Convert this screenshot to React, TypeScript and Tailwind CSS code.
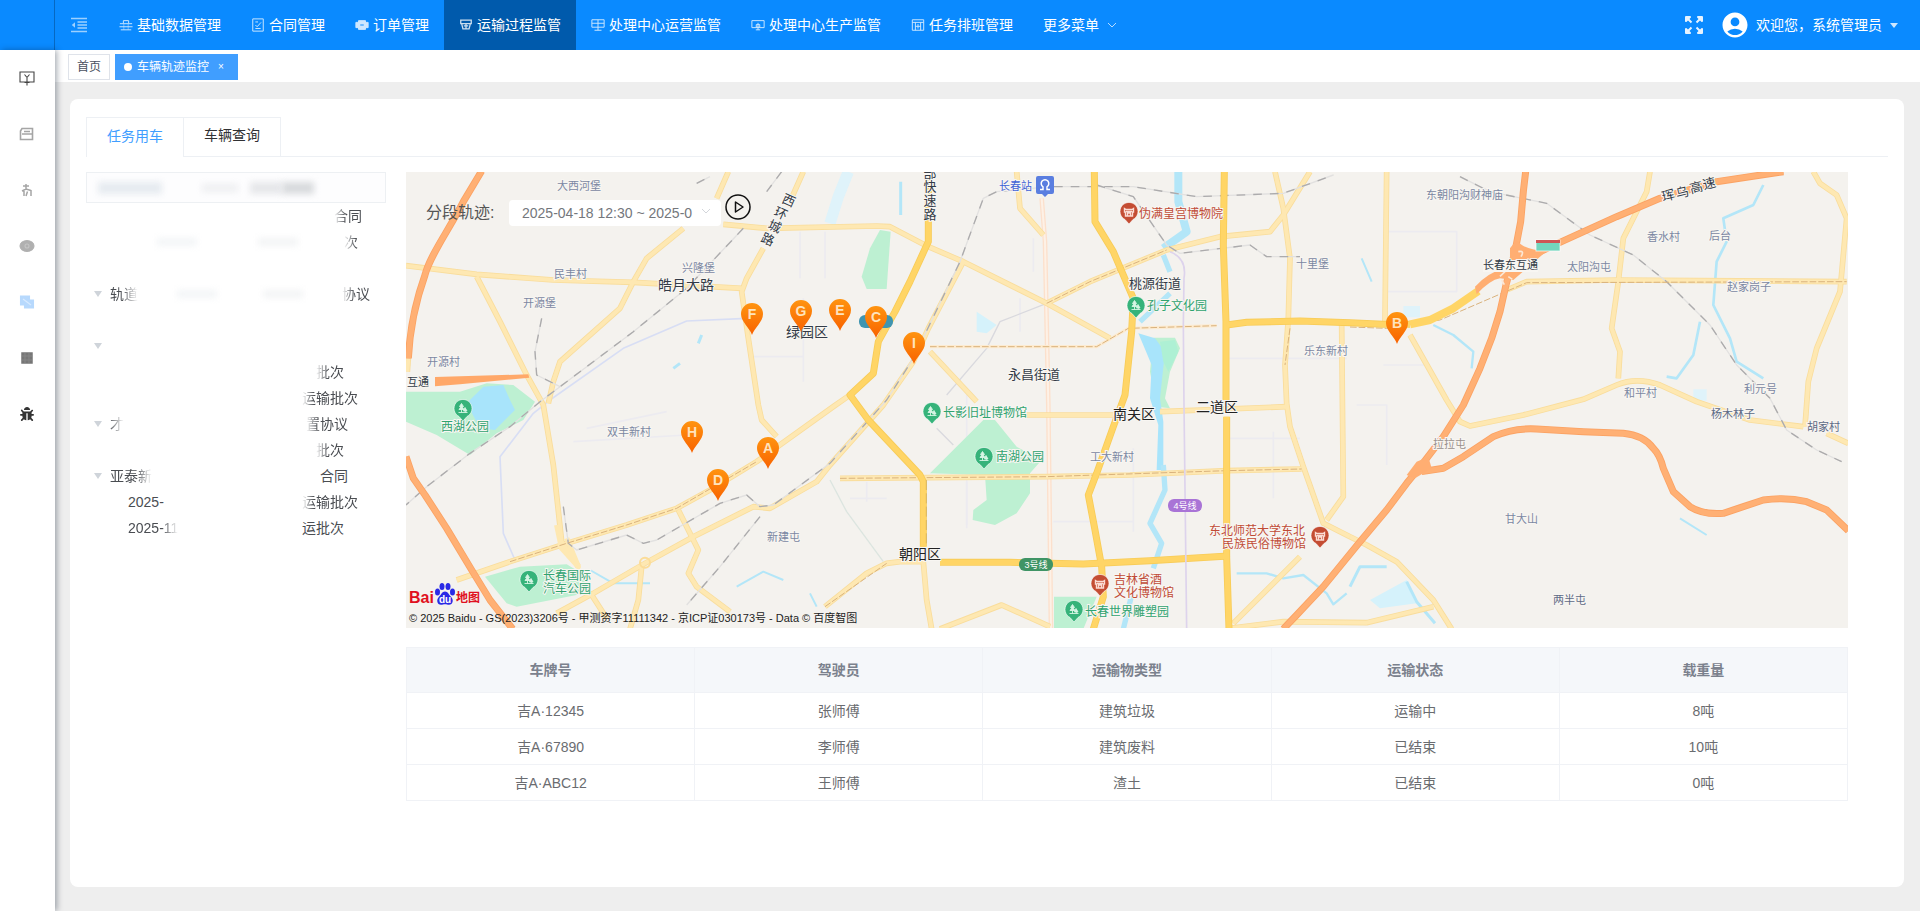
import React from "react";
import { MdAccountCircle } from "react-icons/md";
import { FaBug } from "react-icons/fa";

type IconProps = { className?: string };

function Glyph({ children, className = "size-3.5" }: { children: React.ReactNode; className?: string }) {
  return (
    <svg viewBox="0 0 16 16" className={className} fill="none" stroke="currentColor" strokeWidth="1.1" aria-hidden="true">
      {children}
    </svg>
  );
}

const CollapseIcon = ({ className }: IconProps) => (
  <Glyph className={className}>
    <path d="M0 1.500h16M6.500 5h9.500M6.500 8h9.500M6.500 11h9.500M0 14.500h16" strokeWidth="1.300" />
    <path d="M4 5.200v5.600L0.800 8z" fill="currentColor" stroke="none" />
  </Glyph>
);
const BaseIcon = () => (
  <Glyph>
    <path d="M5 6V3h6v3M1 6.500h14M0.500 10h15M2 13.500h12" />
    <path d="M5.500 6.500v7M10.500 6.500v7" strokeOpacity="0.500" />
  </Glyph>
);
const ContractIcon = () => (
  <Glyph>
    <path d="M2 1h12v14H2zM5 4.500h3M5 12h6M5 8l2 2 4.500-5" />
  </Glyph>
);
const OrderIcon = () => (
  <Glyph>
    <path d="M1 5h14v6H1zM4 3h8v10H4z" fill="currentColor" />
    <path d="M6 8h4" stroke="#0a8aff" />
  </Glyph>
);
const TransportIcon = () => (
  <Glyph>
    <path d="M2 2.500h12v4H2zM3 6.500l1.500 6h7l1.500-6M5.500 9h5M8 6.500v6" strokeWidth="1.500" />
  </Glyph>
);
const OperateIcon = () => (
  <Glyph>
    <path d="M1 2h14v8.500H1zM1 6h14M8 2v12M4 14h8" />
  </Glyph>
);
const ProduceIcon = () => (
  <Glyph>
    <path d="M1 3h14v8H1zM8 5.500v8M6 7.500h4v3H6zM5.500 13.500h5" />
  </Glyph>
);
const ScheduleIcon = () => (
  <Glyph>
    <path d="M1.500 2h13v12h-13zM1.500 5h13M5 5v9M11 5v9M5 9.500h6M8 7v5" />
  </Glyph>
);

const navItems = [
  { label: "基础数据管理", Icon: BaseIcon },
  { label: "合同管理", Icon: ContractIcon },
  { label: "订单管理", Icon: OrderIcon },
  { label: "运输过程监管", Icon: TransportIcon, active: true },
  { label: "处理中心运营监管", Icon: OperateIcon },
  { label: "处理中心生产监管", Icon: ProduceIcon },
  { label: "任务排班管理", Icon: ScheduleIcon },
];

function Header() {
  return (
    <header className="flex h-[50px] shrink-0 items-stretch bg-[#0a8aff] text-sm text-white">
      <div className="w-[55px] shrink-0 border-r border-[#0668c2]" />
      <button aria-label="收起菜单" className="flex w-[49px] items-center pl-4">
        <CollapseIcon className="size-4 opacity-60" />
      </button>
      <nav className="flex">
        {navItems.map(({ label, Icon, active }) => (
          <a
            key={label}
            href="#"
            className={`flex items-center gap-1 px-[15px] whitespace-nowrap ${active ? "bg-[#005aac]" : ""}`}
          >
            <span className="opacity-80">
              <Icon />
            </span>
            {label}
          </a>
        ))}
        <button className="flex items-center gap-2 px-[15px] whitespace-nowrap">
          更多菜单
          <svg viewBox="0 0 10 6" className="h-1.5 w-2.5 opacity-70" fill="none" stroke="currentColor" aria-hidden="true">
            <path d="M1 1l4 4 4-4" />
          </svg>
        </button>
      </nav>
      <div className="ml-auto flex items-center gap-4 pr-[22px]">
        <button aria-label="全屏">
          <svg viewBox="0 0 20 20" className="size-5 opacity-90" fill="currentColor" stroke="currentColor" aria-hidden="true">
            <path d="M2 2h4L2 6zM18 2v4l-4-4zM2 18v-4l4 4zM18 18h-4l4-4z" strokeLinejoin="round" strokeWidth="2" />
            <path d="M3 3l4.500 4.500M17 3l-4.500 4.500M3 17l4.500-4.500M17 17l-4.500-4.500" strokeWidth="2" />
          </svg>
        </button>
        <button className="flex items-center">
          <MdAccountCircle className="size-[30px]" />
          <span className="ml-1.5">欢迎您，系统管理员</span>
          <svg viewBox="0 0 8 5" className="ml-2 h-[5px] w-2 opacity-80" fill="currentColor" aria-hidden="true">
            <path d="M0 0h8L4 5z" />
          </svg>
        </button>
      </div>
    </header>
  );
}

const sideItems = [
  {
    label: "监控",
    tone: "text-[#444]",
    icon: (
      <Glyph className="size-4">
        <path d="M1 2h14v10H1zM8 7v8.500M5.500 12.500h5M5.500 4.500l2.500 3 2.500-3" />
      </Glyph>
    ),
  },
  {
    label: "车辆",
    tone: "text-[#a5a5a5]",
    icon: (
      <Glyph className="size-4">
        <path d="M3 2.500h10.500v11H1.500V5zM3 8h11M5 5.500h6" strokeWidth="1.600" />
      </Glyph>
    ),
  },
  {
    label: "人员",
    tone: "text-[#a5a5a5]",
    icon: (
      <Glyph className="size-4">
        <path d="M7 2v5M4 4h6M3 9l4-2 5 1.500M5 8v6M12 8v6M8.500 9.500L7 14" strokeWidth="1.500" />
      </Glyph>
    ),
  },
  {
    label: "查看",
    tone: "text-[#b0b0b0]",
    icon: (
      <Glyph className="size-4">
        <ellipse cx="8" cy="8" rx="7" ry="5.500" fill="currentColor" />
        <circle cx="8" cy="8" r="2" stroke="#c4c4c4" />
      </Glyph>
    ),
  },
  {
    label: "轨迹",
    tone: "text-[#b7d9fd]",
    icon: (
      <Glyph className="size-4">
        <path d="M1.500 2h9v4h4v8h-9v-3h-4z" fill="currentColor" />
        <path d="M4 5l8 6" stroke="#d9ebff" />
      </Glyph>
    ),
  },
  {
    label: "报表",
    tone: "text-[#777]",
    icon: (
      <Glyph className="size-4">
        <path d="M3 3h10v10H3z" fill="currentColor" strokeWidth="1.500" />
        <path d="M3 6h10M6 3v10M10 3v10M3 10h10" stroke="#868686" />
      </Glyph>
    ),
  },
  { label: "调试", tone: "text-[#333]", icon: <FaBug className="size-3.5" /> },
];

function Sidebar() {
  return (
    <aside className="z-10 w-[55px] shrink-0 bg-white pr-px shadow-[2px_0_6px_rgba(0,21,41,0.35)]">
      <nav className="flex flex-col">
        {sideItems.map((s) => (
          <a key={s.label} href="#" aria-label={s.label} className={`flex h-14 items-center justify-center ${s.tone}`}>
            {s.icon}
          </a>
        ))}
      </nav>
    </aside>
  );
}

type Row = {
  left?: string;
  leftCut?: boolean;
  indent?: boolean;
  right?: string;
  rightCut?: boolean;
  end: string;
  caret?: boolean;
  smudge?: boolean;
};

const treeRows: Row[] = [
  { right: "合同", rightCut: true, end: "pr-6" },
  { right: "次", rightCut: true, end: "pr-7", smudge: true },
  { end: "pr-0" },
  { caret: true, left: "轨道", leftCut: true, right: "协议", rightCut: true, end: "pr-4", smudge: true },
  { end: "pr-0" },
  { caret: true, end: "pr-0" },
  { right: "批次", rightCut: true, end: "pr-[42px]" },
  { right: "运输批次", rightCut: true, end: "pr-7" },
  { caret: true, left: "才", leftCut: true, right: "置协议", rightCut: true, end: "pr-[38px]" },
  { right: "批次", rightCut: true, end: "pr-[42px]" },
  { caret: true, left: "亚泰新", leftCut: true, right: "合同", end: "pr-[38px]" },
  { indent: true, left: "2025-", right: "运输批次", rightCut: true, end: "pr-7" },
  { indent: true, left: "2025-11", leftCut: true, right: "运批次", end: "pr-[42px]" },
];

function Tree() {
  return (
    <section className="w-[300px] shrink-0 text-sm text-[#4a4d52]">
      <div className="relative">
        <input
          aria-label="搜索合同"
          className="block h-[31px] w-full border border-[#edf0f3] bg-[#fdfdfe] px-3 outline-none"
        />
        <div className="pointer-events-none absolute inset-0 flex items-center px-3" aria-hidden="true">
          <div className="h-3 w-16 bg-[#e6ebf0] blur-[3px]" />
          <div className="ml-10 h-2 w-9 bg-[#eeeff1] blur-[3px]" />
          <div className="ml-3 h-3 w-8 bg-[#e6e7ea] blur-[3px]" />
          <div className="h-3 w-8 bg-[#d8dadd] blur-[3px]" />
        </div>
      </div>
      <ul>
        {treeRows.map((r, i) => (
          <li key={i} className={`flex h-[26px] items-center pl-2 ${r.end}`}>
            <span className="flex w-4 shrink-0">
              {r.caret && (
                <svg viewBox="0 0 8 6" className="h-1.5 w-2 text-[#cfd4da]" fill="currentColor" aria-hidden="true">
                  <path d="M0 0h8L4 6z" />
                </svg>
              )}
            </span>
            <span className={`whitespace-nowrap ${r.indent ? "pl-[18px]" : ""}`}>
              <span className={r.leftCut ? "[mask-image:linear-gradient(to_left,transparent,black_16px)]" : ""}>
                {r.left}
              </span>
            </span>
            <span className="flex flex-1 items-center justify-around px-4" aria-hidden="true">
              {r.smudge && (
                <>
                  <span className="h-2 w-10 bg-[#f3f5f7] blur-[3px]" />
                  <span className="h-2 w-10 bg-[#f3f4f5] blur-[3px]" />
                </>
              )}
            </span>
            <span
              className={`whitespace-nowrap ${
                r.rightCut ? "[mask-image:linear-gradient(to_right,transparent,black_12px)]" : ""
              }`}
            >
              {r.right}
            </span>
          </li>
        ))}
      </ul>
    </section>
  );
}

const gx = (x: number) => Math.round(x / 3 - 6);
const gy = (y: number) => Math.round(y / 3 - 7);

const greens = [
  "18,680 180,680 260,655 340,660 405,710 370,765 290,805 210,870 110,810 18,770",
  "1440,195 1472,200 1460,372 1400,372 1385,335 1410,250",
  "1590,925 1750,765 1785,765 1850,845 1925,885 1890,925 1890,985 1850,1045 1785,1080 1718,1065 1720,1035 1760,1005 1755,930",
  "255,1235 360,1205 500,1198 570,1240 530,1290 350,1325 320,1315",
  "1962,1295 2090,1295 2050,1392 1962,1392",
  "2260,518 2325,518 2340,550 2310,620 2295,700 2310,730 2270,725 2250,620",
];
const waters = [
  "200,715 250,665 310,660 330,705 345,735 285,795 240,790",
  "2215,505 2265,520 2295,560 2280,700 2290,770 2290,915 2270,915 2275,780 2250,700 2255,600",
];
const ponds = ["2910,1305 3020,1245 3050,1315 2940,1330", "1730,440 1790,480 1760,505 1730,500"];
const streams = [
  { d: "M2335 20V110L2360 200L2290 250", w: 24 },
  { d: "M2290 270L2310 320M2310 385L2220 470", w: 16 },
  { d: "M2290 900L2295 975L2250 1075L2285 1135L2260 1210M2195 1290L2170 1392", w: 16 },
  { d: "M4090 60L4060 120L3970 160L3980 230L3950 290L3940 420L3990 520L4010 590L4090 640", w: 8 },
  { d: "M3900 470L3880 570L3830 640L3800 635", w: 8 },
  { d: "M3100 480L3160 510L3220 560L3215 610", w: 7 },
  { d: "M2850 1265L2880 1205L2960 1205M3020 1250L3050 1310L3105 1375", w: 9 },
  { d: "M2510 1225L2600 1225L2650 1240L2710 1230L2780 1285L2800 1318L2840 1285", w: 7 },
  { d: "M1010 1265L1090 1220L1150 1245M1230 1285L1250 1325M570 1215L640 1255L750 1255", w: 6 },
  { d: "M895 535L905 510M820 610L840 595M1502 50V150", w: 9 },
  { d: "M2885 280L2915 350M3840 1060L3920 1110", w: 6 },
];
const faint = [
  "M1200 200V340M1275 200V340M1060 575H1210M1210 400V650",
  "M1400 950V1010M1700 690V1090M1860 400V500M2200 1070H1960M2480 580H2840M2200 850V1100",
  "M2960 200H3170V380H2960M2950 600H3080M2870 720H2960V900",
  "M560 790L800 740M520 830L860 810M1900 220V320M2470 820H2700M2620 800V1000",
  "M1350 1000H1460M1700 950V1080",
];
const paleRoads = [
  "M18 302L230 328L460 345L700 352L1025 370",
  "M985 20L950 100M850 190L740 280L700 350L660 430L480 590L460 650L445 715",
  "M230 335L300 470L380 630L430 720L440 780L460 900L485 1130L535 1205",
  "M1210 20L1170 110M1090 250L1040 340L1025 380L1045 520L1075 720L1085 765L1130 815",
  "M970 178L1100 190L1430 183L1470 185L1585 245L1690 290L1940 415L2130 520",
  "M170 1245L330 1190L500 1135L680 1080L830 1030L930 975L1070 890L1300 725L1350 690",
  "M470 1345L580 1285L735 1195L880 1115L1060 1025L1110 1030L1250 950L1290 900L1450 720L1540 590L1585 490L1690 290",
  "M835 1035L895 1155L865 1225L890 1265L990 1340",
  "M725 1205L715 1305L690 1392M575 1290L620 1360",
  "M1275 1325L1400 1225L1460 1195L1500 1190L1570 1190",
  "M1320 940L1940 935L2190 930L2480 917L2705 912",
  "M1850 20L1860 130L1930 210",
  "M1940 415L2070 350L2300 255L2460 215L2610 200L2650 150L2730 20",
  "M2625 20L2650 130L2670 280L2665 460L2655 600L2660 715L2670 785L2710 905L2770 1075L2850 1115",
  "M2825 480L2830 995L2780 1065",
  "M1880 750H2150M2280 740L2660 725",
  "M1590 560L1730 710",
  "M1570 1190L1580 1305L1595 1392M1620 1392L1805 1320L1950 1385",
  "M2500 1375L2700 1175M2490 1390L2650 1370L2900 1373L3100 1325",
  "M2850 1115L2900 1140L2990 1190L3100 1305L3155 1392",
  "M2960 20L2955 470M3030 510L3140 705L3180 770L3210 783L3370 750L3550 703L3650 660Q3710 635 3780 660L3890 710L4050 765L4210 785M4280 805L4345 835",
  "M3750 20L3740 80L3670 220L3655 350L3635 490L3660 560L3655 640",
  "M3320 375L3380 350L3650 345L4340 350",
  "M4240 20L4260 55L4310 90L4340 160L4320 380L4250 550L4225 650L4215 785",
  "M25 580L22 620",
];
const yellowRoads = [
  "M1585 20V230L1530 350L1485 440L1435 530L1420 625L1350 690L1405 765L1560 930L1570 950V1145",
  "M1620 1192L1830 1192L2050 1197L2250 1187L2485 1173",
  "M2083 20L2085 170L2140 260L2200 400L2195 500L2175 690L2140 785L2090 925L2065 990L2085 1095L2105 1205L2110 1295L2080 1392",
  "M2473 20L2470 240L2478 470V705M2480 755V1175L2487 1392",
  "M2480 480L2540 472L2700 468L2850 473L2950 478L3030 478",
];
const highways = [
  "M245 18L190 110C150 190 90 270 75 330C50 400 30 480 25 580",
  "M18 875L40 940L75 990L140 1090L215 1215L270 1305L338 1392",
  "M3377 20L3370 80L3362 170L3345 260L3318 360L3300 440L3275 520L3240 610L3190 720L3130 815L3065 900L3020 955L2960 1035L2880 1130L2770 1265L2690 1350L2650 1392",
  "M4150 20L3950 50L3780 100L3650 155L3480 232L3410 265",
  "M3065 920L3130 910L3190 875L3280 815Q3340 788 3410 792L3550 800L3670 805Q3730 810 3760 850Q3780 870 3790 910L3820 980L3870 1025Q3910 1050 3970 1045L4030 1025L4090 1005Q4160 995 4220 1010L4280 1035L4345 1097",
];
const rails = [
  "M1145 20L1100 80M1030 190L860 370L700 500L500 650L420 710L330 785L210 865L80 965L18 1020",
  "M890 55L930 35M425 460L405 560L410 630L480 665",
  "M490 1025L505 1135L530 1155L680 1110L730 1135L770 1125L960 1015L1040 990L1080 1025L1120 1020L1290 895L1460 705L1540 580L1680 290L1750 100L1790 80L1950 65L2200 65L2390 95L2650 85L2800 30",
  "M1080 1055L960 1205L860 1320",
  "M2090 60L2200 95L2300 240L2340 265L2550 240L2600 275L2700 275",
  "M3180 35L3270 80L3440 115L3570 210L3700 270L3800 350L3930 480L4010 600L4110 700L4160 795L4250 855L4325 890",
];
const railOverlay =
  "M330 1190L500 1135L680 1080L830 1030L1070 890M1320 940L1940 935L2480 917L2705 912M1940 415L2070 350L2300 255M1590 545H2090L2185 490L2450 482M2850 486L2960 490L3120 465L3380 353L4340 350M2670 490L2655 600M1275 1325L1460 1195";

type Label = [text: string, x: number, y: number, size: number, tone: string];
const SLATE = "#7b87a2";
const INK = "#333b47";
const GREEN = "#2fa36f";
const RED = "#c04b36";
const labels: Label[] = [
  ["大西河堡", 472, 62, 11, SLATE],
  ["民丰村", 462, 327, 11, SLATE],
  ["兴隆堡", 845, 308, 11, SLATE],
  ["开源堡", 368, 415, 11, SLATE],
  ["开源村", 80, 591, 11, SLATE],
  ["互通", 20, 651, 11, INK],
  ["皓月大路", 773, 360, 14, INK],
  ["绿园区", 1157, 502, 14, INK],
  ["西湖公园", 122, 787, 12, GREEN],
  ["双丰新村", 622, 800, 11, SLATE],
  ["新建屯", 1102, 1117, 11, SLATE],
  ["长春国际", 428, 1233, 12, GREEN],
  ["汽车公园", 428, 1271, 12, GREEN],
  ["长春站", 1798, 63, 11, "#3f63d6"],
  ["伪满皇宫博物院", 2218, 148, 12, RED],
  ["桃源街道", 2188, 355, 13, INK],
  ["孔子文化园", 2240, 423, 12, GREEN],
  ["永昌街道", 1825, 626, 13, INK],
  ["十里堡", 2689, 296, 11, SLATE],
  ["乐东新村", 2712, 557, 11, SLATE],
  ["长影旧址博物馆", 1628, 745, 12, GREEN],
  ["南湖公园", 1787, 877, 12, GREEN],
  ["南关区", 2138, 747, 14, "#222"],
  ["二道区", 2388, 727, 14, "#222"],
  ["工大新村", 2070, 877, 11, SLATE],
  ["朝阳区", 1498, 1168, 14, "#222"],
  ["东北师范大学东北", 2428, 1099, 12, RED],
  ["民族民俗博物馆", 2466, 1137, 12, RED],
  ["吉林省酒", 2143, 1245, 12, RED],
  ["文化博物馆", 2143, 1283, 12, RED],
  ["长春世界雕塑园", 2055, 1341, 12, GREEN],
  ["东朝阳沟财神庙", 3078, 90, 11, SLATE],
  ["香水村", 3742, 216, 11, SLATE],
  ["后台", 3928, 213, 11, SLATE],
  ["太阳沟屯", 3500, 305, 11, SLATE],
  ["赵家岗子", 3982, 366, 11, SLATE],
  ["和平村", 3672, 684, 11, SLATE],
  ["利元号", 4032, 673, 11, SLATE],
  ["杨木林子", 3932, 747, 11, "#5d6a85"],
  ["胡家村", 4220, 786, 11, "#5d6a85"],
  ["拉拉屯", 3100, 838, 11, "#98908c"],
  ["甘大山", 3314, 1061, 11, SLATE],
  ["两半屯", 3460, 1306, 11, "#5d6a85"],
];

const markers: [string, number, number][] = [
  ["F", 1057, 446],
  ["G", 1204, 437],
  ["E", 1321, 434],
  ["C", 1429, 455],
  ["I", 1543, 533],
  ["H", 877, 800],
  ["A", 1105, 848],
  ["D", 953, 944],
  ["B", 2992, 473],
];

const parkPins: [number, number][] = [
  [189, 732],
  [386, 1246],
  [2207, 422],
  [1595, 740],
  [1751, 875],
  [2022, 1336],
];
const museumPins: [number, number][] = [
  [2186, 142],
  [2759, 1113],
  [2099, 1256],
];

function PoiPin({ x, y, fill, park }: { x: number; y: number; fill: string; park?: boolean }) {
  return (
    <g transform={`translate(${gx(x)} ${gy(y)})`}>
      <path d="M0 12L-4 7.500A9 9 0 1 1 4 7.500Z" fill={fill} stroke="#fff" strokeOpacity="0.600" />
      {park ? (
        <path
          d="M-1.500 -5.500L-3.500 -2.500h4zM-1.500 -3L-4 0.500h5zM2 -1.500L0.500 2h3.500zM-1.500 0v3.500M2.300 1v2.500M-4.500 3.500h9"
          fill="#d6f5e4"
          stroke="#d6f5e4"
          strokeWidth="0.900"
        />
      ) : (
        <path
          d="M-4.500 -3.500L-3 -2.500H3L4.500 -3.500V0H3.500V4H-3.500V0H-4.500zM-1.500 4V1h3v3M-3 -0.500h6"
          fill="none"
          stroke="#fbdcd4"
          strokeWidth="1.400"
        />
      )}
    </g>
  );
}

function LineBadge({ x, y, fill, text }: { x: number; y: number; fill: string; text?: string }) {
  return (
    <g>
      <rect x={gx(x)} y={gy(y)} width="34" height="13" rx="6" fill={fill} />
      {text && (
        <text x={gx(x) + 17} y={gy(y) + 10} fontSize="9" fill="#fff" textAnchor="middle">
          {text}
        </text>
      )}
    </g>
  );
}

const ringRoad: [string, number, number][] = [
  ["西", 1166, 105],
  ["环", 1144, 143],
  ["城", 1124, 183],
  ["路", 1103, 223],
];
const expressway: [string, number][] = [
  ["部", 23],
  ["快", 64],
  ["速", 105],
  ["路", 147],
];
const hunwu: [string, number, number][] = [
  ["珲", 3803, 90],
  ["乌", 3845, 80],
  ["高", 3887, 66],
  ["速", 3926, 55],
];

function MapCanvas() {
  return (
    <svg
      viewBox="0 0 1442 456"
      preserveAspectRatio="xMidYMid slice"
      className="block h-[456px] w-full"
      role="img"
      aria-label="车辆轨迹地图"
      fontFamily="'Liberation Sans', 'Noto Sans CJK SC', sans-serif"
    >
      <defs>
        <linearGradient id="marker" x1="0" y1="0" x2="0" y2="1">
          <stop offset="0" stopColor="#ff9410" />
          <stop offset="1" stopColor="#f86200" />
        </linearGradient>
      </defs>
      <rect width="1442" height="456" fill="#f4f2ee" />
      <g transform="translate(-6 -7) scale(0.33333)" fill="none" strokeLinejoin="round">
        {faint.map((d) => (
          <path key={d} d={d} stroke="#ecebf0" strokeWidth="5" />
        ))}
        {greens.map((p) => (
          <polygon key={p} points={p} fill="#bdf0d2" />
        ))}
        <g stroke="#dff3fa" strokeWidth="34">
          <path d="M1345 20L1315 95L1290 175" />
          <path d="M3010 440H3060M3880 690H3920" />
        </g>
        {ponds.map((p) => (
          <polygon key={p} points={p} fill="#d5f2fb" />
        ))}
        {waters.map((p) => (
          <polygon key={p} points={p} fill="#a8e4fb" />
        ))}
        <polygon points="2280,530 2325,525 2335,560 2305,620 2290,590" fill="#aef0d4" />
        {streams.map((s) => (
          <path key={s.d} d={s.d} stroke="#b3e6f8" strokeWidth={s.w} />
        ))}
        <path d="M1040 460L860 468L670 550L450 705L400 745L300 875L310 1105L345 1185" stroke="#d8def4" strokeWidth="5" />
        <path d="M1290 945L1340 1040L1450 1190" stroke="#dce5e0" strokeWidth="4" />
        <path d="M1610 790L1660 840M1640 690L1760 550L1800 470L1940 415" stroke="#d9d9de" strokeWidth="4" />
        <path d="M1925 100L1935 230L1945 720L1953 1392" stroke="#fce0cc" strokeWidth="14" />
        <path d="M1925 100L1935 230L1945 720L1953 1392" stroke="#fdf1e6" strokeWidth="6" />
        <path d="M1590 545H2090L2185 490L2450 482" stroke="#fdebd0" strokeWidth="10" />
        {paleRoads.map((d) => (
          <path key={d} d={d} stroke="#f9dd9c" strokeWidth="17" />
        ))}
        {paleRoads.map((d) => (
          <path key={d} d={d} stroke="#fee8b2" strokeWidth="12" />
        ))}
        <path d="M470 1080L485 1150L535 1205L500 1120" stroke="#fee8b2" strokeWidth="16" />
        <circle cx="735" cy="1193" r="15" stroke="#fbdc98" strokeWidth="6" />
        {rails.map((d) => (
          <g key={d} strokeWidth="4">
            <path d={d} stroke="#e2e1e0" />
            <path d={d} stroke="#acabac" strokeDasharray="26 24" />
          </g>
        ))}
        <path d={railOverlay} stroke="#d9b27c" strokeWidth="3" strokeDasharray="20 6" />
        {yellowRoads.map((d) => (
          <path key={d} d={d} stroke="#f8cc58" strokeWidth="21" />
        ))}
        {yellowRoads.map((d) => (
          <path key={d} d={d} stroke="#ffd566" strokeWidth="16" />
        ))}
        <path d="M3030 478L3090 465L3160 430L3235 378" stroke="#ffd566" strokeWidth="24" />
        <path d="M1579 945V1140" stroke="#c9a75c" strokeWidth="2" strokeDasharray="30 10" />
        {highways.map((d) => (
          <path key={d} d={d} stroke="#fba263" strokeWidth="21" />
        ))}
        {highways.map((d) => (
          <path key={d} d={d} stroke="#ffb074" strokeWidth="16" />
        ))}
        <path d="M105 636L385 628L388 638L180 658L105 664Z" fill="#ffa869" />
        <path d="M3225 365Q3260 325 3330 300L3330 250L3350 225Q3370 255 3440 258L3340 345L3300 340Q3270 345 3230 388Z" fill="#ffae72" />
        <path d="M3355 260q20-5 8 15M3315 320l-15 14M3305 345l8 14M3325 335l12 8" stroke="#fbe7d6" strokeWidth="5" />
        <path d="M3050 890l35-15l10 35l-50 30l-25-10z" fill="#ffae72" />
        <path d="M2310 260Q2362 280 2352 340L2350 480L2352 720L2360 1392" stroke="#ddd3ec" strokeWidth="5" />
      </g>

      <g stroke="#f8f6f2" strokeWidth="2" paintOrder="stroke">
        <rect x={gx(3250)} y={gy(284)} width="55" height="12" fill="#f8f6f2" stroke="none" />
        <text x={gx(3250)} y={gy(300) + 4} fontSize="11" fill={INK}>
          长春东互通
        </text>
        {labels.map(([t, x, y, size, tone]) => (
          <text key={t} x={gx(x)} y={gy(y) + Math.round(size * 0.36)} fontSize={size} fill={tone}>
            {t}
          </text>
        ))}
        {ringRoad.map(([t, x, y]) => (
          <text key={t} transform={`translate(${gx(x)} ${gy(y)}) rotate(24)`} y="5" fontSize="13" fill={INK} textAnchor="middle">
            {t}
          </text>
        ))}
        {expressway.map(([t, y]) => (
          <text key={t} x={gx(1591)} y={gy(y) + 5} fontSize="13" fill={INK} textAnchor="middle">
            {t}
          </text>
        ))}
        {hunwu.map(([t, x, y]) => (
          <text key={t} transform={`translate(${gx(x)} ${gy(y)}) rotate(-14)`} y="5" fontSize="13" fill={INK} textAnchor="middle">
            {t}
          </text>
        ))}
      </g>

      <LineBadge x={2303} y={1001} fill="#a974d6" text="4号线" />
      <LineBadge x={1857} y={1178} fill="#3f9465" text="3号线" />
      <LineBadge x={1377} y={450} fill="#3f95b0" />
      <rect x={gx(3408)} y={gy(225)} width="24" height="11" fill="#73d6bd" stroke="#fff" strokeOpacity="0.700" />
      <rect x={gx(3408)} y={gy(225)} width="24" height="3" fill="#cf5555" />
      <g transform={`translate(${gx(1936)} ${gy(59)})`}>
        <path d="M-7 -9H7Q9 -9 9 -7V7Q9 9 7 9H3L0 12L-3 9H-7Q-9 9-9 7V-7Q-9-9-7-9Z" fill="#5a7ee0" />
        <path d="M-5 4.500h3V1.800a3.800 3.800 0 1 1 4 0v2.700h3" fill="none" stroke="#fff" strokeWidth="1.500" />
      </g>
      {parkPins.map(([x, y]) => (
        <PoiPin key={x} x={x} y={y} fill="#36b37a" park />
      ))}
      {museumPins.map(([x, y]) => (
        <PoiPin key={x} x={x} y={y} fill="#c44d33" />
      ))}

      {markers.map(([t, x, y]) => (
        <g key={t} transform={`translate(${gx(x)} ${gy(y)})`}>
          <path d="M0 21C-2 14 -11 8 -11 0A11 11 0 0 1 11 0C11 8 2 14 0 21Z" fill="url(#marker)" />
          <text y="5" fontSize="14" fontWeight="700" fill="#ffe3bd" textAnchor="middle">
            {t}
          </text>
        </g>
      ))}
    </svg>
  );
}

function BaiduLogo() {
  return (
    <div className="flex items-end font-bold text-[#e01020]">
      <span className="text-base leading-4">Bai</span>
      <svg viewBox="0 0 22 24" className="h-6 w-[22px]" fill="#2a2ae6" aria-hidden="true">
        <ellipse cx="3.500" cy="10" rx="2.500" ry="3.500" />
        <ellipse cx="8" cy="4.500" rx="2.500" ry="3.500" />
        <ellipse cx="14" cy="4.500" rx="2.500" ry="3.500" />
        <ellipse cx="18.500" cy="10" rx="2.500" ry="3.500" />
        <path d="M11 9.500c3 0 3.500 3 6 5.200c3 2.800 2 8-2 8c-1.500 0-2.500-0.500-4-0.500s-2.500 0.500-4 0.500c-4 0-5-5.200-2-8C7.500 12.500 8 9.500 11 9.500z" />
        <text x="11" y="21" fontSize="10" fontWeight="700" fill="#fff" textAnchor="middle">
          du
        </text>
      </svg>
      <span className="text-xs leading-4">地图</span>
    </div>
  );
}

function MapPanel() {
  return (
    <div className="relative overflow-hidden">
      <MapCanvas />
      <div className="absolute top-[22px] left-5 flex items-start">
        <label htmlFor="segment" className="w-[83px] pt-[7px] text-base leading-6 whitespace-nowrap text-[#555]">
          分段轨迹:
        </label>
        <div className="relative mt-1.5">
          <select
            id="segment"
            className="h-[26px] w-[212px] appearance-none rounded-sm bg-white pl-[13px] text-sm text-[#74777c] outline-none"
          >
            <option>2025-04-18 12:30 ~ 2025-0</option>
          </select>
          <svg viewBox="0 0 10 6" className="pointer-events-none absolute top-2 right-2.5 h-1.5 w-2.5" fill="none" stroke="#d3d6db" aria-hidden="true">
            <path d="M1 1l4 4 4-4" />
          </svg>
        </div>
        <button aria-label="播放" className="ml-1">
          <svg viewBox="0 0 26 26" className="size-[26px]" fill="none" stroke="#111" strokeWidth="1.500" strokeLinejoin="round" aria-hidden="true">
            <circle cx="13" cy="13" r="12" />
            <path d="M10.500 8l7.500 5l-7.500 5z" />
          </svg>
        </button>
      </div>
      <div className="absolute bottom-0.5 left-[3px] text-[#222]">
        <BaiduLogo />
        <p className="mt-1 text-[11px] leading-4">
          © 2025 Baidu - GS(2023)3206号 - 甲测资字11111342 - 京ICP证030173号 - Data © 百度智图
        </p>
      </div>
    </div>
  );
}

const columns = ["车牌号", "驾驶员", "运输物类型", "运输状态", "载重量"];
const vehicles = [
  ["吉A·12345", "张师傅", "建筑垃圾", "运输中", "8吨"],
  ["吉A·67890", "李师傅", "建筑废料", "已结束", "10吨"],
  ["吉A·ABC12", "王师傅", "渣土", "已结束", "0吨"],
];

function VehicleTable() {
  return (
    <table className="mt-[19px] w-full table-fixed border-collapse text-center text-sm text-[#6a6c70]">
      <thead>
        <tr className="h-[45px] bg-[#f5f7fa] text-[#7b818d]">
          {columns.map((c) => (
            <th key={c} scope="col" className="border border-[#f0f2f6] font-bold">
              {c}
            </th>
          ))}
        </tr>
      </thead>
      <tbody>
        {vehicles.map((v) => (
          <tr key={v[0]} className="h-9">
            {v.map((cell, i) => (
              <td key={i} className="border border-[#f0f2f6]">
                {cell}
              </td>
            ))}
          </tr>
        ))}
      </tbody>
    </table>
  );
}

export default function App() {
  return (
    <div className="flex min-h-screen flex-col bg-[#eee] font-['Liberation_Sans','Noto_Sans_CJK_SC',sans-serif]">
      <Header />
      <div className="flex flex-1">
        <Sidebar />
        <div className="flex min-w-0 flex-1 flex-col">
          <div className="flex h-8 items-start gap-[5px] bg-white pt-1 pl-[13px] text-xs">
            <a href="#" className="flex h-[26px] items-center border border-[#dfe3ea] px-2 text-[#495060]">
              首页
            </a>
            <a href="#" className="flex h-[26px] items-center bg-[#409eff] px-[9px] text-white">
              <span className="mr-[5px] size-2 rounded-full bg-white" />
              车辆轨迹监控
              <span className="mr-1 ml-2 w-2 text-center text-[10px]">×</span>
            </a>
          </div>
          <main className="mx-4 mt-[17px] mb-6 ml-[15px] flex-1 rounded-lg bg-white px-4 pt-[18px] pb-10">
            <div role="tablist" className="flex h-10 border-b border-[#edf0f4] text-sm">
              <button
                role="tab"
                aria-selected="true"
                className="-mb-px border border-b-0 border-[#edf0f4] bg-white px-5 pb-1 text-[#409eff]"
              >
                任务用车
              </button>
              <button role="tab" aria-selected="false" className="border-t border-r border-[#edf0f4] px-5 pb-1 text-[#303133]">
                车辆查询
              </button>
            </div>
            <div className="mt-[15px] flex gap-5 pr-10">
              <Tree />
              <section className="min-w-0 flex-1">
                <MapPanel />
                <VehicleTable />
              </section>
            </div>
          </main>
        </div>
      </div>
    </div>
  );
}
